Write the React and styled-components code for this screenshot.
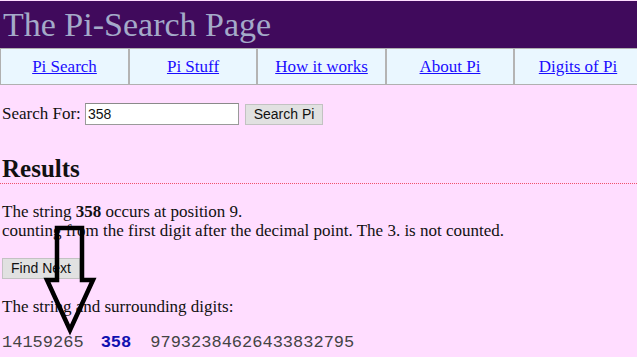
import React from "react";
import styled, { createGlobalStyle } from "styled-components";

const Global = createGlobalStyle`
  html, body { margin: 0; padding: 0; }
  body {
    background: #ffddff;
    font-family: "Liberation Serif", "Times New Roman", serif;
    font-size: 17px;
    color: #111;
    overflow: hidden;
  }
`;

const Page = styled.div`
  position: relative;
  width: 637px;
  height: 357px;
  padding-top: 1px;
  box-sizing: border-box;
  overflow: hidden;
  background: #ffddff;
`;

const Banner = styled.h1`
  margin: 0;
  height: 47px;
  background: #400a5c;
  color: #a4aac9;
  font-weight: normal;
  font-size: 34px;
  line-height: 47px;
  padding-left: 3px;
  white-space: nowrap;
`;

const Nav = styled.nav`
  display: grid;
  grid-template-columns: 129px 128px 129px 128px 128px;
  width: 643px;
  border-top: 1px solid #b0b0b0;
  border-bottom: 1px solid #b0b0b0;
  border-left: 1px solid #b0b0b0;
`;

const NavCell = styled.div`
  height: 35px;
  background: #eaf7ff;
  border-right: 2px solid #b4b4b4;
  display: flex;
  align-items: center;
  justify-content: center;
`;

const NavLink = styled.a`
  color: #1a0dff;
  text-decoration: underline;
  font-size: 17px;
`;

const Main = styled.main`
  padding: 0 2px;
`;

const SearchRow = styled.form`
  display: flex;
  align-items: center;
  margin: 18px 0 0;
  height: 22px;
`;

const Label = styled.label`
  width: 83px;
  white-space: nowrap;
`;

const TextBox = styled.div`
  width: 150px;
  height: 20px;
  background: #fff;
  border: 1px solid #9a9a9a;
  border-top-color: #8a8a8a;
  font-family: "Liberation Sans", Arial, sans-serif;
  font-size: 14px;
  line-height: 20px;
  padding-left: 2px;
  color: #111;
`;

const Button = styled.button`
  font-family: "Liberation Sans", Arial, sans-serif;
  font-size: 14px;
  color: #111;
  background: #e1e1e1;
  border: 1px solid #c2c2c2;
  height: 21px;
  width: 78px;
  padding: 0;
  margin: 0 0 0 ${(p) => p.$gap || 0}px;
  line-height: 19px;
`;

const Heading = styled.h2`
  margin: 29px 0 0;
  font-size: 25px;
  font-weight: bold;
  line-height: 29px;
  color: #111;
`;

const Rule = styled.div`
  margin: 0 -2px;
  border-bottom: 1px dotted #f0506a;
`;

const Para = styled.p`
  margin: 18px 0 0;
  line-height: 19px;
`;

const ButtonRow = styled.div`
  margin-top: 18px;
  height: 21px;
  display: flex;
`;

const Digits = styled.div`
  margin-top: 17px;
  font-family: "Liberation Mono", "Courier New", monospace;
  font-size: 17px;
  color: #444;
  white-space: pre;
  line-height: 20px;
`;

const Match = styled.b`
  color: #1010b0;
  margin: 0 19px 0 17px;
`;

const ArrowLayer = styled.svg`
  position: absolute;
  left: 0;
  top: 0;
  pointer-events: none;
`;

const links = ["Pi Search", "Pi Stuff", "How it works", "About Pi", "Digits of Pi"];

export default function App() {
  return (
    <Page>
      <Global />
      <Banner>The Pi-Search Page</Banner>
      <Nav>
        {links.map((l) => (
          <NavCell key={l}>
            <NavLink href="#">{l}</NavLink>
          </NavCell>
        ))}
      </Nav>
      <Main>
        <SearchRow onSubmit={(e) => e.preventDefault()}>
          <Label>Search For:</Label>
          <TextBox>358</TextBox>
          <Button type="button" $gap={6}>Search Pi</Button>
        </SearchRow>
        <Heading>Results</Heading>
        <Rule />
        <Para>
          The string <b>358</b> occurs at position 9.
          <br />
          counting from the first digit after the decimal point. The 3. is not counted.
        </Para>
        <ButtonRow>
          <Button type="button">Find Next</Button>
        </ButtonRow>
        <Para>The string and surrounding digits:</Para>
        <Digits>
          14159265<Match>358</Match>97932384626433832795
        </Digits>
      </Main>
      <ArrowLayer width="637" height="357" viewBox="0 0 637 357">
        <polygon
          points="57,228 82,228 82,280 93,280 70,330 47,280 57,280"
          fill="none"
          stroke="#000"
          strokeWidth="4.5"
          strokeLinejoin="miter"
        />
      </ArrowLayer>
    </Page>
  );
}
